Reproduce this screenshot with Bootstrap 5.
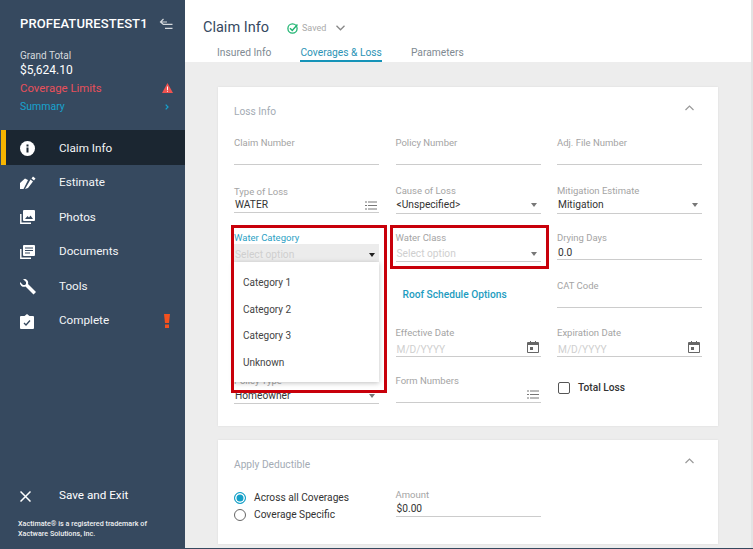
<!DOCTYPE html>
<html lang="en"><head><meta charset="utf-8"><title>Claim Info</title>
<link href="https://cdn.jsdelivr.net/npm/bootstrap@5.3.0/dist/css/bootstrap.min.css" rel="stylesheet">
<style>
html,body{height:549px;overflow:hidden}
body{font-family:Roboto,"Liberation Sans",sans-serif;background:#ededed;color:#333;font-size:11px}
.shell{width:753px;height:549px}
.side{width:185px;background:#36495f;color:#fff;flex:none}
.side-head{padding:16px 12px 0 20px;height:130px}
.org{font-size:13px;font-weight:500;line-height:16px;letter-spacing:.1px}
.gt-label{font-size:10px;line-height:12px;margin-top:18px;color:#d5d9dd}
.gt-val{font-size:12px;line-height:16px}
.limit{color:#e8505b;font-size:11.400px;line-height:14px;margin-top:3px}
.summ{color:#16a3d0;font-size:10.500px;line-height:14px;margin-top:5px}
.nav-it{height:34.6px;padding:2px 0 0 20px;font-size:11.700px;color:#f3f5f7}
.nav-it .ic{width:39px;display:flex}
.nav-it.on{background:#1b2631;border-left:5px solid #f7b500;margin-left:1px;padding-left:14px}
.warn-ic{margin-right:15px}
.legal{font-size:7.200px;line-height:9.500px;padding:0 0 11px 18px;font-weight:500;color:#eef0f2}
.exit{height:30px;padding-left:20px;font-size:11.700px;margin-bottom:8px}
.exit .ic{width:39px;display:flex}
.main{min-width:0}
.topbar{background:#fff;height:62px;padding:19px 0 0 18px}
.ttl{font-size:14.500px;line-height:18px;color:#36495f;margin-right:18px}
.saved{color:#aaa;font-size:9px;margin:1px 10px 0 4px}
.tabsx{gap:29px;padding-left:14px;margin-top:8px}
.tabx{font-size:10.250px;line-height:15px;color:#808a92;height:17px}
.tabx.on{color:#2b93b5;border-bottom:2px solid #1593b8}
.content{padding:25px 33px 0;gap:14px}
.pnl{background:#fff;box-shadow:0 0 2px rgba(0,0,0,.08)}
.pnl-a{height:339px;padding:18px 16px 0}
.pnl-b{height:104px;padding:18px 16px 0}
.pnl-t{font-size:10.200px;color:#a3abb4;line-height:13px}
.fgrid{display:grid;grid-template-columns:145px 145px 145px;column-gap:16.500px;grid-auto-rows:47.600px;margin-top:19px}
.fld{position:relative;height:47.600px}
.lb{font-size:9.500px;line-height:12px;color:#a4a4a4;display:block}
.lb-on{color:#2c9fc4}
.val{height:16px;line-height:14px;font-size:10.200px;border-bottom:1px solid #ccc;color:#333;display:flex;align-items:center;justify-content:space-between;padding-left:1px;padding-right:2px}
.tall{height:17px}
.low{height:18px;padding-top:3px}
.low2{padding-top:2px}
.date{height:18px;padding-top:5px}
.date svg{margin-top:-6px}
.ph{color:#cfcfcf}
.car{width:0;height:0;border:3.500px solid transparent;border-top:4px solid #777;border-bottom:0;margin-right:2px}
.dk{border-top-color:#222}
.lowered{margin-top:1px;margin-bottom:-1px}
.foc{background:#ececec;border-color:#6fb9d0;height:19px}
.redb{position:absolute;border:3px solid #c8000a;pointer-events:none;z-index:4}
.red-a{left:231px;top:225px;width:156px;height:168px}
.red-b{left:390px;top:225px;width:159px;height:44px}
.menu-pop{position:absolute;left:234px;top:262px;width:145px;height:120px;background:#fff;box-shadow:0 1px 5px rgba(0,0,0,.25);padding:8px 9px;font-size:10px;color:#444;z-index:3}
.menu-pop div{height:26.600px;line-height:26.600px}
.roof{color:#1d9cc0;font-weight:500;font-size:10.200px;padding:7px 0 0 7px}
.chk{width:12px;height:12px;border:1.500px solid #555;border-radius:2px;margin:0 8px 0 1px}
.tl{font-size:10.200px;color:#333;font-weight:500;line-height:12px}
.tot{padding-top:7px}
.rd{width:12px;height:12px;border-radius:50%;border:1.300px solid #666;margin-right:8px;flex:none}
.rd.on{border-color:#14a0c8;background:#14a0c8;box-shadow:inset 0 0 0 1.500px #fff}
.rl{font-size:10.200px;line-height:17px;color:#333}
.rcol{width:161.500px}
.acol{width:145px}
.ded{margin-top:18px}
.scr{width:2px;background:#e3e3e3;flex:none}
.btm{position:absolute;left:185px;right:0;top:548px;height:1px;background:#36495f}
</style></head><body>
<div class="shell d-flex position-relative">
<aside class="side d-flex flex-column">
<div class="side-head">
<div class="org d-flex justify-content-between align-items-center">PROFEATURESTEST1
<svg width="14" height="12" viewBox="0 0 14 12" fill="none" stroke="#d5d9dd" stroke-width="1.200"><path d="M4.500 1 1.500 4l3 2.500M1.500 4H8M3.500 6.300H13.500M6 10.300H13.500"/></svg></div>
<div class="gt-label">Grand Total</div><div class="gt-val">$5,624.10</div>
<div class="limit d-flex justify-content-between align-items-center">Coverage Limits<svg width="11" height="10" viewBox="0 0 11 10"><path fill="#ef5350" d="M5.500 0 11 10H0z"/><path fill="#fff" d="M5 3.500h1v3.500H5zM5 7.800h1v1H5z"/></svg></div>
<div class="summ d-flex justify-content-between align-items-center">Summary<svg class="me-1" width="4" height="6" viewBox="0 0 4 6" fill="none" stroke="#16a3d0" stroke-width="1.200"><path d="m.7.700 2.300 2.300-2.300 2.300"/></svg></div>
</div>
<nav>
<div class="nav-it on d-flex align-items-center"><span class="ic"><svg width="15" height="15" viewBox="0 0 15 15"><circle cx="7.500" cy="7.500" r="7.500" fill="#fff"/><rect x="6.500" y="6.500" width="2" height="5" fill="#1b2631"/><rect x="6.500" y="3.500" width="2" height="2" fill="#1b2631"/></svg></span>Claim Info</div>
<div class="nav-it d-flex align-items-center"><span class="ic"><svg width="16" height="14" viewBox="0 0 16 14" fill="#fff"><path d="M0 7 5 2.500 8 4 3.500 13H0zM5 13 10.500 3.500 13 5.500 8 12zM11.500 2.500 13 .5l2.500 2-1.500 2z"/></svg></span>Estimate</div>
<div class="nav-it d-flex align-items-center"><span class="ic"><svg width="15" height="15" viewBox="0 0 15 15"><path fill="none" stroke="#fff" stroke-width="1.400" d="M.8 4v9.300H11"/><rect x="3" y="0" width="12" height="11" rx="1" fill="#fff"/><path fill="#36495f" d="m5 9 2.500-3 1.500 1.500 1.500-2 2.500 3.500z"/></svg></span>Photos</div>
<div class="nav-it d-flex align-items-center"><span class="ic"><svg width="15" height="15" viewBox="0 0 15 15"><path fill="none" stroke="#fff" stroke-width="1.400" d="M.8 4v9.300H11"/><rect x="3" y="0" width="12" height="11" rx="1" fill="#fff"/><path stroke="#36495f" d="M5 3h8M5 5.500h8M5 8h5"/></svg></span>Documents</div>
<div class="nav-it d-flex align-items-center"><span class="ic"><svg width="17" height="16" viewBox="0 0 17 16" fill="#fff"><path d="M0 3 3 6h2l1-1V3L3 0a4 4 0 0 1 5 5l8 8-2.500 2.500-8-8A4 4 0 0 1 0 3z"/></svg></span>Tools</div>
<div class="nav-it d-flex align-items-center"><span class="ic"><svg width="14" height="15" viewBox="0 0 14 15"><path fill="#fff" d="M1 2h3.500L7 0l2.500 2H13a1 1 0 0 1 1 1v11a1 1 0 0 1-1 1H1a1 1 0 0 1-1-1V3a1 1 0 0 1 1-1z"/><path fill="none" stroke="#36495f" stroke-width="1.300" d="m4 9 2 2 4-4.500"/></svg></span><span class="flex-grow-1">Complete</span><svg class="warn-ic" width="6" height="14" viewBox="0 0 6 14" fill="#f4511e"><path d="M0 0h6L5 9H1zM1 10.500h4V14H1z"/></svg></div>
</nav>
<div class="mt-auto">
<div class="exit d-flex align-items-center"><span class="ic"><svg width="11" height="11" viewBox="0 0 11 11" stroke="#fff" stroke-width="1.500"><path d="m.5.500 10 10M10.500.500l-10 10"/></svg></span>Save and Exit</div>
<div class="legal">Xactimate® is a registered trademark of<br>Xactware Solutions, Inc.</div>
</div>
</aside>
<div class="main flex-grow-1 d-flex flex-column">
<header class="topbar">
<div class="d-flex align-items-center"><span class="ttl">Claim Info</span>
<svg width="11" height="11" viewBox="0 0 11 11" fill="none"><circle cx="5.500" cy="5.500" r="4.600" stroke="#22b573" stroke-width="1.300"/><path d="m3 5.200 2.300 2.300L10.500 1.500" stroke="#22b573" stroke-width="1.500"/></svg>
<span class="saved">Saved</span>
<svg width="9" height="6" viewBox="0 0 9 6" fill="none" stroke="#888" stroke-width="1.300"><path d="m.5.800 4 4 4-4"/></svg></div>
<div class="tabsx d-flex"><span class="tabx">Insured Info</span><span class="tabx on">Coverages &amp; Loss</span><span class="tabx">Parameters</span></div>
</header>
<div class="content d-flex flex-column">
<section class="pnl pnl-a">
<div class="d-flex justify-content-between"><span class="pnl-t">Loss Info</span><svg class="me-2" width="9" height="6" viewBox="0 0 9 6" fill="none" stroke="#999" stroke-width="1.200"><path d="m.5 5 4-4 4 4"/></svg></div>
<div class="fgrid">
<div class="fld"><span class="lb">Claim Number</span><div class="val"></div></div>
<div class="fld"><span class="lb">Policy Number</span><div class="val"></div></div>
<div class="fld"><span class="lb">Adj. File Number</span><div class="val"></div></div>
<div class="fld"><span class="lb lowered">Type of Loss</span><div class="val low2">WATER<svg width="12" height="9" viewBox="0 0 12 9" stroke="#777"><path d="M0 1h2M3 1h9M0 4.500h2M3 4.500h9M0 8h2M3 8h9"/></svg></div></div>
<div class="fld"><span class="lb">Cause of Loss</span><div class="val tall">&lt;Unspecified&gt;<i class="car"></i></div></div>
<div class="fld"><span class="lb">Mitigation Estimate</span><div class="val tall">Mitigation<i class="car"></i></div></div>
<div class="fld"><span class="lb lb-on">Water Category</span><div class="val ph foc low">Select option<i class="car dk"></i></div></div>
<div class="fld"><span class="lb">Water Class</span><div class="val ph low">Select option<i class="car"></i></div></div>
<div class="fld"><span class="lb">Drying Days</span><div class="val low2">0.0</div></div>
<div class="fld"></div>
<div class="fld"><div class="roof">Roof Schedule Options</div></div>
<div class="fld"><span class="lb">CAT Code</span><div class="val"></div></div>
<div class="fld"></div>
<div class="fld"><span class="lb">Effective Date</span><div class="val ph date">M/D/YYYY<svg width="12" height="12" viewBox="0 0 12 12"><path fill="#666" d="M1 1h2V0h1v1h4V0h1v1h2a1 1 0 0 1 1 1v9a1 1 0 0 1-1 1H1a1 1 0 0 1-1-1V2a1 1 0 0 1 1-1zm0 3v7h10V4z"/><rect x="3" y="6" width="3" height="3" fill="#666"/></svg></div></div>
<div class="fld"><span class="lb">Expiration Date</span><div class="val ph date">M/D/YYYY<svg width="12" height="12" viewBox="0 0 12 12"><path fill="#666" d="M1 1h2V0h1v1h4V0h1v1h2a1 1 0 0 1 1 1v9a1 1 0 0 1-1 1H1a1 1 0 0 1-1-1V2a1 1 0 0 1 1-1zm0 3v7h10V4z"/><rect x="3" y="6" width="3" height="3" fill="#666"/></svg></div></div>
<div class="fld"><span class="lb">Policy Type</span><div class="val tall low2">Homeowner<i class="car"></i></div></div>
<div class="fld"><span class="lb">Form Numbers</span><div class="val"><span></span><svg width="12" height="9" viewBox="0 0 12 9" stroke="#777"><path d="M0 1h2M3 1h9M0 4.500h2M3 4.500h9M0 8h2M3 8h9"/></svg></div></div>
<div class="fld d-flex align-items-start tot"><span class="chk"></span><span class="tl">Total Loss</span></div>
</div>
</section>
<section class="pnl pnl-b">
<div class="d-flex justify-content-between"><span class="pnl-t">Apply Deductible</span><svg class="me-2" width="9" height="6" viewBox="0 0 9 6" fill="none" stroke="#999" stroke-width="1.200"><path d="m.5 5 4-4 4 4"/></svg></div>
<div class="d-flex ded">
<div class="rcol">
<div class="d-flex align-items-center rl"><span class="rd on"></span>Across all Coverages</div>
<div class="d-flex align-items-center rl"><span class="rd"></span>Coverage Specific</div></div>
<div class="acol"><span class="lb">Amount</span><div class="val">$0.00</div></div>
</div>
</section>
</div>
</div>
<div class="scr"></div>
<div class="btm"></div>
<div class="menu-pop"><div>Category 1</div><div>Category 2</div><div>Category 3</div><div>Unknown</div></div>
<div class="redb red-a"></div>
<div class="redb red-b"></div>
</div>
</body></html>
